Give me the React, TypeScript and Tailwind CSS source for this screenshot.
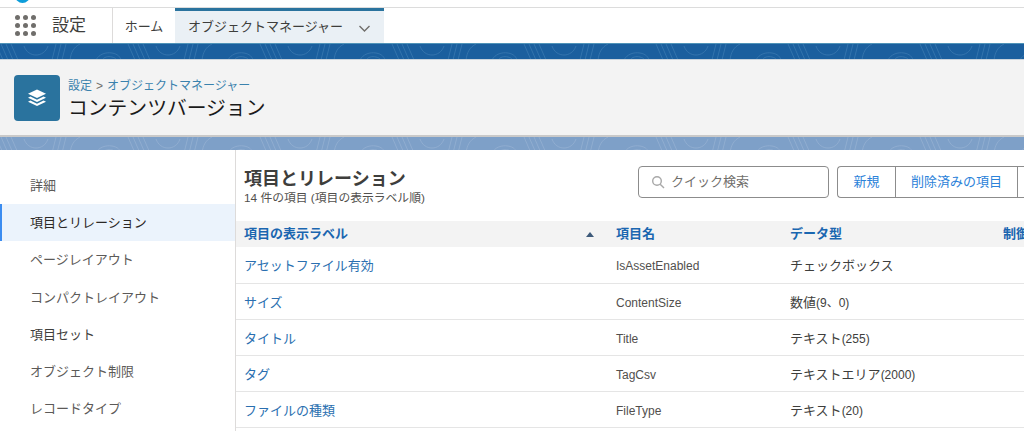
import React from "react";

const font = { fontFamily: '"Liberation Sans", "Noto Sans CJK JP", sans-serif' };

function Waves({ stroke, height }: { stroke: string; height: number }) {
  const items = Array.from({ length: 8 }, (_, i) => i);
  return (
    <svg className="absolute inset-0" width="1024" height={height} viewBox={`0 0 1024 ${height}`} fill="none" stroke={stroke} strokeWidth="0.8">
      {items.map((i) => (
        <g key={i} transform={`translate(${i * 132 - 10} 0)`}>
          <path d="M6 0L13 16M11 0L18 16M16 0L23 16M21 0L28 16" />
          <path d="M34 2C38 14 54 14 58 2" />
          <path d="M62 16L66 0M67 16L71 0M72 16L76 0" />
          <path d="M80 16C81 8 84 3 90 0" />
          <path d="M106 16C109 10 116 8 122 9S130 13 131 16" />
          <path d="M112 16C114 13 118 12 122 13S126 15 126 16" />
        </g>
      ))}
    </svg>
  );
}

const sideItems = ["詳細", "項目とリレーション", "ページレイアウト", "コンパクトレイアウト", "項目セット", "オブジェクト制限", "レコードタイプ"];

const rows = [
  ["アセットファイル有効", "IsAssetEnabled", "チェックボックス", ""],
  ["サイズ", "ContentSize", "数値", "(9、0)"],
  ["タイトル", "Title", "テキスト", "(255)"],
  ["タグ", "TagCsv", "テキストエリア", "(2000)"],
  ["ファイルの種類", "FileType", "テキスト", "(20)"],
];

export default function App() {
  return (
    <div className="w-[1024px] h-[431px] overflow-hidden bg-white text-[#2b2826]" style={font}>
      <div className="h-[8px] relative border-b border-[#dcdcdc] overflow-hidden">
        <div className="absolute left-[15px] top-[-12px] w-[15px] h-[15px] rounded-full bg-[#0d9dda]" />
      </div>
      <div className="h-[35px] flex">
        <div className="w-[113px] flex items-center border-r border-[#dddbda]">
          <div className="ml-[15px] grid grid-cols-3 gap-[3px]">
            {Array.from({ length: 9 }, (_, i) => (
              <span key={i} className="w-[5px] h-[5px] rounded-full bg-[#706e6b]" />
            ))}
          </div>
          <span className="ml-[16px] text-[17px] text-[#3e3e3c] pt-[1px]">設定</span>
        </div>
        <div className="w-[62px] flex items-center justify-center text-[13px] pt-[3px] text-[#3e3e3c]">ホーム</div>
        <div className="w-[209px] bg-[#eaf0f5] border-t-[3px] border-[#2a739e] flex items-center pl-[13px] text-[13px] text-[#3e3e3c]">
          <span>オブジェクトマネージャー</span>
          <svg className="ml-[15px] mt-[2px]" width="13" height="13" viewBox="0 0 13 13" fill="none" stroke="#706e6b" strokeWidth="1.4">
            <path d="M1.5 4l5 5 5-5" />
          </svg>
        </div>
      </div>
      <div className="h-[16px] bg-[#1b5f9e] border-t border-[#4f93b8] relative overflow-hidden">
        <Waves stroke="#3a78b0" height={16} />
      </div>
      <div className="h-[78px] bg-[#f3f3f3] border-t border-[#c9d3dc] border-b-2 border-b-[#c9c9c9] flex items-center pl-[14px]">
        <div className="w-[46px] h-[46px] rounded-[4px] bg-[#2a739e] flex items-center justify-center">
          <svg width="22" height="22" viewBox="0 0 22 22" fill="#fff">
            <path d="M11 2.5l9 4.2-9 4.2-9-4.2z" />
            <path d="M4.4 9.6L11 12.7l6.6-3.1 2.4 1.1-9 4.2-9-4.2z" />
            <path d="M4.4 13.6L11 16.7l6.6-3.1 2.4 1.1-9 4.2-9-4.2z" />
          </svg>
        </div>
        <div className="ml-[8px] pt-[5px]">
          <div className="text-[12px] leading-[16px] text-[#706e6b]">
            <span className="text-[#3a82ad]">設定</span>
            <span className="mx-[4px]">&gt;</span>
            <span className="text-[#3a82ad]">オブジェクトマネージャー</span>
          </div>
          <div className="text-[19.8px] leading-[28px] text-[#1a1a1a]">コンテンツバージョン</div>
        </div>
      </div>
      <div className="h-[13px] bg-[#7ea0c8] relative overflow-hidden">
        <Waves stroke="#94b0d2" height={13} />
      </div>
      <div className="flex">
        <div className="w-[236px] shrink-0 border-r border-[#dddbda] pt-[17px] h-[281px]">
          {sideItems.map((s, i) => (
            <div
              key={s}
              className={
                "h-[37px] flex items-center text-[13px] " +
                (i === 1
                  ? "bg-[#ebf3fc] border-l-2 border-[#3b8cf0] pl-[28px] text-[#2b2826]"
                  : i === 4
                  ? "pl-[30px] pt-[2px] text-[#3e3e3c]"
                  : i > 2
                  ? "pl-[30px] pt-[2px] text-[#5c5a58]"
                  : "pl-[30px] text-[#5c5a58]")
              }
            >
              {s}
            </div>
          ))}
        </div>
        <div className="flex-1 min-w-0">
          <div className="h-[71px] flex pl-[8px]">
            <div className="pt-[17px]">
              <div className="text-[18px] leading-[24px] font-bold text-[#3e3e3c] whitespace-nowrap">項目とリレーション</div>
              <div className="text-[11.8px] leading-[15px] text-[#514f4d] whitespace-nowrap">14 件の項目 (項目の表示ラベル順)</div>
            </div>
            <div className="ml-auto mt-[16px] flex h-[32px]">
              <div className="w-[191px] border border-[#8c8c8c] rounded-[4px] flex items-center pl-[12px] text-[13px] text-[#706e6b]">
                <svg width="14" height="14" viewBox="0 0 14 14" fill="none" stroke="#a8a8a8" strokeWidth="1.4">
                  <circle cx="6" cy="6" r="4.3" />
                  <path d="M9.2 9.2L13 13" />
                </svg>
                <span className="ml-[6px]">クイック検索</span>
              </div>
              <div className="ml-[8px] flex border border-r-0 border-[#8c8c8c] rounded-l-[4px] w-[187px] text-[13px] text-[#2b82d9]">
                <div className="w-[58px] flex items-center justify-center border-r border-[#8c8c8c]">新規</div>
                <div className="w-[122px] flex items-center justify-center border-r border-[#8c8c8c]">削除済みの項目</div>
              </div>
            </div>
          </div>
          <div className="h-[26px] bg-[#f3f3f3] flex items-center pl-[8px] text-[13px] font-bold text-[#1a66b0] whitespace-nowrap">
            <div className="w-[372px] shrink-0 flex items-center pr-[22px] justify-between">
              <span>項目の表示ラベル</span>
              <span className="w-0 h-0 border-x-[4px] border-x-transparent border-b-[5px] border-b-[#3e5a7a]" />
            </div>
            <div className="w-[174px] shrink-0">項目名</div>
            <div className="w-[213px] shrink-0">データ型</div>
            <div className="shrink-0">制御項目</div>
          </div>
          {rows.map((r, i) => (
            <div key={r[1]} className={(i === 0 ? "h-[37px]" : "h-[36px]") + " flex items-center pl-[8px] pt-[2px] border-b border-[#e5e5e5]"}>
              <div className="w-[372px] shrink-0 text-[13px] text-[#2a6fb0]">{r[0]}</div>
              <div className="w-[174px] shrink-0 text-[12px] text-[#514f4d]">{r[1]}</div>
              <div className="text-[13px] text-[#3e3e3c]">
                {r[2]}
                <span className="text-[12px]">{r[3]}</span>
              </div>
            </div>
          ))}
        </div>
      </div>
    </div>
  );
}
